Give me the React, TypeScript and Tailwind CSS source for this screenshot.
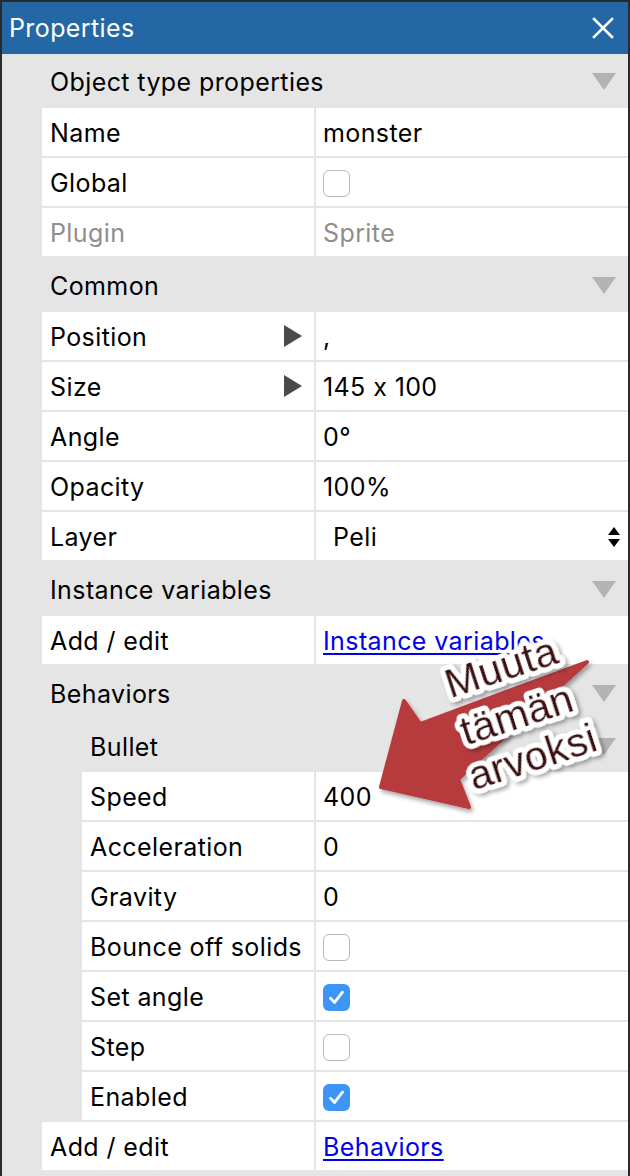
import React from 'react';
import { clsx } from 'clsx';

type RowProps = {
  label: string;
  children?: React.ReactNode;
  indent?: boolean;
  muted?: boolean;
  expander?: boolean;
};

function DownTriangle() {
  return (
    <svg width="24" height="17" viewBox="0 0 24 17" aria-hidden="true">
      <polygon points="0,0 24,0 12,17" fill="#b3b3b3" />
    </svg>
  );
}

function RightTriangle() {
  return (
    <svg width="18" height="22" viewBox="0 0 18 22" aria-hidden="true">
      <polygon points="0,0 18,11 0,22" fill="#4a4a4a" />
    </svg>
  );
}

function Checkbox({ checked }: { checked?: boolean }) {
  if (checked) {
    return (
      <div className="w-[27px] h-[27px] rounded-[6px] bg-[#3d96f7] flex items-center justify-center">
        <svg width="17" height="15" viewBox="0 0 17 15" aria-hidden="true">
          <path d="M2.5 8.2 L6.6 12.4 L14.5 2.2" fill="none" stroke="#fff" strokeWidth="2.8" strokeLinecap="round" strokeLinejoin="round" />
        </svg>
      </div>
    );
  }
  return <div className="w-[27px] h-[27px] rounded-[6px] bg-white border border-[#b8b8b8]" />;
}

function SectionHeader({ title, indent }: { title: string; indent?: boolean }) {
  return (
    <div
      className={clsx(
        'flex items-center justify-between pr-[12px] text-black',
        indent ? 'h-[52px] pl-[88px]' : 'h-[54px] pl-[48px]'
      )}
    >
      <span className="pt-[2px]">{title}</span>
      <DownTriangle />
    </div>
  );
}

function Row({ label, children, indent, muted, expander }: RowProps) {
  return (
    <div className={clsx('flex h-[50px] pb-[2px] gap-[2px]', indent ? 'pl-[80px]' : 'pl-[40px]')}>
      <div
        className={clsx(
          'flex-1 bg-white flex items-center justify-between pl-[8px] pr-[12px]',
          muted ? 'text-[#8e8e8e]' : 'text-black'
        )}
      >
        <span className="pt-[2px]">{label}</span>
        {expander && <RightTriangle />}
      </div>
      <div
        className={clsx(
          'w-[312px] bg-white flex items-center pl-[7px] pt-[2px]',
          muted ? 'text-[#8e8e8e]' : 'text-black'
        )}
      >
        {children}
      </div>
    </div>
  );
}

function Annotation() {
  return (
    <svg className="absolute left-0 top-0 pointer-events-none" width="630" height="1176" viewBox="0 0 630 1176">
      <defs>
        <filter id="shadow" x="-20%" y="-20%" width="140%" height="140%">
          <feDropShadow dx="2" dy="3" stdDeviation="2" floodColor="#000" floodOpacity="0.35" />
        </filter>
      </defs>
      <line x1="81" y1="823" x2="457" y2="823" stroke="#b73b3d" strokeWidth="7" strokeLinecap="round" filter="url(#shadow)" />
      <polygon
        points="585,660 418,722 402,699 379,785 467,805 456,777"
        fill="#b73b3d"
        stroke="#b73b3d"
        strokeWidth="4"
        strokeLinejoin="round"
        filter="url(#shadow)"
      />
      <g
        transform="translate(519 726) rotate(-18)"
        fontFamily="'Liberation Sans', Arial, sans-serif"
        fontSize="41"
        textAnchor="middle"
        fill="#3b0d0b"
        stroke="#fff"
        strokeWidth="10"
        strokeLinejoin="round"
        style={{ paintOrder: 'stroke fill' }}
        filter="url(#shadow)"
      >
        <text x="0" y="-50">Muuta</text>
        <text x="0" y="0">tämän</text>
        <text x="2" y="45">arvoksi</text>
      </g>
    </svg>
  );
}

export default function App() {
  return (
    <div className="relative w-[630px] h-[1176px] overflow-hidden bg-[#e5e5e5] border-x-2 border-t-2 border-[#2a2a2a] font-['Inter',sans-serif] [font-feature-settings:'calt'_0] text-[25px] tracking-[0.4px] leading-none">
      {/* Title bar */}
      <div className="h-[52px] bg-[#2368a4] flex items-center justify-between pl-[7px] pr-[14px]">
        <span className="text-white text-[25px] pt-[1px]">Properties</span>
        <svg width="22" height="22" viewBox="0 0 22 22" aria-label="Close">
          <path d="M2 2 L20 20 M20 2 L2 20" stroke="#fff" strokeWidth="2.6" strokeLinecap="square" />
        </svg>
      </div>

      <SectionHeader title="Object type properties" />
      <Row label="Name">monster</Row>
      <Row label="Global">
        <Checkbox />
      </Row>
      <Row label="Plugin" muted>
        Sprite
      </Row>

      <SectionHeader title="Common" />
      <Row label="Position" expander>
        ,
      </Row>
      <Row label="Size" expander>
        145 x 100
      </Row>
      <Row label="Angle">0°</Row>
      <Row label="Opacity">100%</Row>
      <Row label="Layer">
        <div className="flex-1 flex items-center justify-between pl-[10px] pr-[8px]">
          <span>Peli</span>
          <svg width="12" height="21" viewBox="0 0 12 21" aria-hidden="true">
            <polygon points="6,0 12,8 0,8" fill="#000" />
            <polygon points="0,12 12,12 6,20" fill="#000" />
          </svg>
        </div>
      </Row>

      <SectionHeader title="Instance variables" />
      <Row label="Add / edit">
        <a href="#" className="text-[#0000ee] underline underline-offset-[3px]">
          Instance variables
        </a>
      </Row>

      <SectionHeader title="Behaviors" />
      <SectionHeader title="Bullet" indent />
      <Row label="Speed" indent>
        400
      </Row>
      <Row label="Acceleration" indent>
        0
      </Row>
      <Row label="Gravity" indent>
        0
      </Row>
      <Row label="Bounce off solids" indent>
        <Checkbox />
      </Row>
      <Row label="Set angle" indent>
        <Checkbox checked />
      </Row>
      <Row label="Step" indent>
        <Checkbox />
      </Row>
      <Row label="Enabled" indent>
        <Checkbox checked />
      </Row>
      <Row label="Add / edit">
        <a href="#" className="text-[#0000ee] underline underline-offset-[3px]">
          Behaviors
        </a>
      </Row>

      <Annotation />
    </div>
  );
}
